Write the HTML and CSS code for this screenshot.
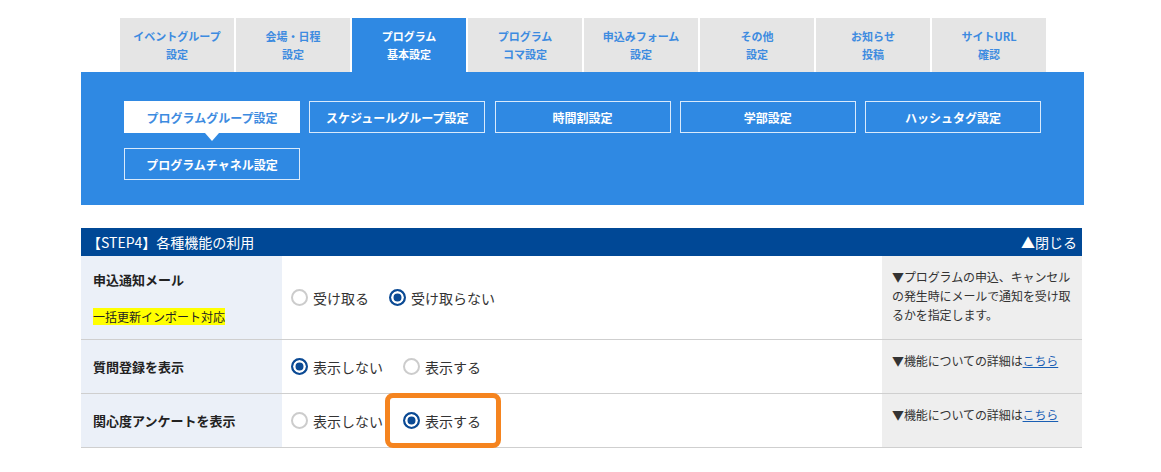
FILE: index.html
```html
<!DOCTYPE html>
<html lang="ja">
<head>
  <meta charset="UTF-8" />
  <meta name="viewport" content="width=device-width, initial-scale=1.0"/>
  <title>プログラム基本設定</title>
  <link rel="stylesheet" href="styles.css">
</head>
<body>
  <div class="page">
    <div class="main-tabs">
      <a class="main-tab" href="#">イベントグループ<br>設定</a>
      <a class="main-tab" href="#">会場・日程<br>設定</a>
      <a class="main-tab active" href="#">プログラム<br>基本設定</a>
      <a class="main-tab" href="#">プログラム<br>コマ設定</a>
      <a class="main-tab" href="#">申込みフォーム<br>設定</a>
      <a class="main-tab" href="#">その他<br>設定</a>
      <a class="main-tab" href="#">お知らせ<br>投稿</a>
      <a class="main-tab" href="#">サイトURL<br>確認</a>
    </div>

    <div class="sub-panel">
      <div class="sub-nav">
        <a class="sub-btn active" href="#">プログラムグループ設定</a>
        <a class="sub-btn" href="#">スケジュールグループ設定</a>
        <a class="sub-btn" href="#">時間割設定</a>
        <a class="sub-btn" href="#">学部設定</a>
        <a class="sub-btn" href="#">ハッシュタグ設定</a>
        <a class="sub-btn" href="#">プログラムチャネル設定</a>
      </div>
    </div>

    <div class="step-box">
      <div class="step-head">
        <span>【STEP4】各種機能の利用</span>
        <a class="step-toggle" href="#">▲閉じる</a>
      </div>

      <div class="step-row">
        <div class="cell-label">
          <div class="label-title">申込通知メール</div>
          <span class="import-mark">一括更新インポート対応</span>
        </div>
        <div class="cell-input">
          <label class="choice"><input type="radio" name="mail"><span>受け取る</span></label>
          <label class="choice"><input type="radio" name="mail" checked><span>受け取らない</span></label>
        </div>
        <div class="cell-note">▼プログラムの申込、キャンセルの発生時にメールで通知を受け取るかを指定します。</div>
      </div>

      <div class="step-row short">
        <div class="cell-label">
          <div class="label-title">質問登録を表示</div>
        </div>
        <div class="cell-input">
          <label class="choice"><input type="radio" name="question" checked><span>表示しない</span></label>
          <label class="choice"><input type="radio" name="question"><span>表示する</span></label>
        </div>
        <div class="cell-note">▼機能についての詳細は<a href="#">こちら</a></div>
      </div>

      <div class="step-row short">
        <div class="cell-label">
          <div class="label-title">関心度アンケートを表示</div>
        </div>
        <div class="cell-input">
          <label class="choice"><input type="radio" name="survey"><span>表示しない</span></label>
          <label class="choice marked"><input type="radio" name="survey" checked><span>表示する</span></label>
        </div>
        <div class="cell-note">▼機能についての詳細は<a href="#">こちら</a></div>
      </div>
    </div>
  </div>
</body>
</html>
```

FILE: styles.css
```css
body {
  margin: 0;
  font-family: "Noto Sans CJK JP", "Noto Sans", sans-serif;
  color: #222;
  background: #fff;
}

.page {
  width: 1003px;
  margin-left: 81px;
  padding-top: 18px;
}

/* top tabs */
.main-tabs {
  display: flex;
  gap: 2px;
  padding-left: 39px;
}

.main-tab {
  width: 114px;
  height: 54px;
  display: flex;
  align-items: center;
  justify-content: center;
  text-align: center;
  background-color: #e5e5e5;
  color: #3d8be0;
  font-size: 11px;
  font-weight: bold;
  line-height: 18px;
  text-decoration: none;
}

.main-tab.active {
  background-color: #2f89e3;
  color: #fff;
}

/* sub menu panel */
.sub-panel {
  background-color: #2f89e3;
  padding: 29px 0 25px 43px;
}

.sub-nav {
  display: flex;
  flex-wrap: wrap;
  gap: 15px 9.25px;
}

.sub-btn {
  position: relative;
  box-sizing: border-box;
  width: 176px;
  height: 32px;
  display: flex;
  align-items: center;
  justify-content: center;
  border: 1px solid #d9eafc;
  color: #fff;
  font-size: 12px;
  font-weight: bold;
  text-decoration: none;
}

.sub-btn.active {
  background-color: #fff;
  border-color: #fff;
  color: #3d8be0;
}

.sub-btn.active::after {
  content: "";
  position: absolute;
  left: 50%;
  top: 31px;
  margin-left: -7px;
  border-left: 7px solid transparent;
  border-right: 7px solid transparent;
  border-top: 8px solid #fff;
}

/* step table */
.step-box {
  width: 1001px;
  margin-top: 23px;
}

.step-head {
  display: flex;
  justify-content: space-between;
  align-items: center;
  height: 28px;
  padding: 0 5px 0 6px;
  background-color: #004896;
  color: #fff;
  font-size: 14px;
}

.step-toggle {
  color: #fff;
  text-decoration: none;
}

.step-row {
  display: flex;
  min-height: 83px;
  border-bottom: 1px solid #cfcfcf;
}

.step-row.short {
  min-height: 53px;
}

.cell-label {
  width: 201px;
  box-sizing: border-box;
  padding: 0 12px;
  background-color: #ebf0f8;
  display: flex;
  flex-direction: column;
  justify-content: center;
  align-items: flex-start;
}

.label-title {
  font-size: 13px;
  font-weight: bold;
  line-height: 20px;
}

.import-mark {
  margin-top: 18px;
  background-color: #ffff00;
  font-size: 12px;
  color: #222;
}

.cell-input {
  width: 600px;
  box-sizing: border-box;
  padding: 0 9px;
  display: flex;
  align-items: center;
  gap: 20px;
}

.choice {
  position: relative;
  display: flex;
  align-items: center;
  gap: 5px;
  font-size: 14px;
  color: #333;
  line-height: 20px;
}

.choice input {
  appearance: none;
  -webkit-appearance: none;
  box-sizing: border-box;
  flex: none;
  margin: 0;
  width: 17px;
  height: 17px;
  border: 2px solid #cccccc;
  border-radius: 50%;
  background: #fff;
}

.choice input:checked {
  border-color: #0b4a94;
  background-color: #0b4a94;
  box-shadow: inset 0 0 0 2.5px #fff;
}

/* orange frame drawn around a choice */
.choice.marked::after {
  content: "";
  position: absolute;
  left: -18px;
  right: -20px;
  top: -18px;
  bottom: -17px;
  border: 5px solid #f5841f;
  border-radius: 8px;
}

.cell-note {
  width: 200px;
  box-sizing: border-box;
  padding: 11px 10px 9px;
  background-color: #eeeeee;
  font-size: 12px;
  line-height: 19px;
  color: #333;
  letter-spacing: -0.1px;
}

.cell-note a {
  color: #1a5fb4;
}
```
